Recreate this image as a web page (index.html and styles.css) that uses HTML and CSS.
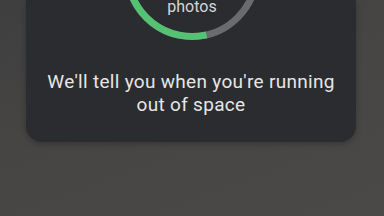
FILE: index.html
```html
<!DOCTYPE html>
<html lang="en">
<head>
  <meta charset="UTF-8">
  <title>Storage</title>
  <link rel="stylesheet" href="styles.css">
</head>
<body>
  <div class="card">
    <svg class="ring" width="136" height="41" viewBox="0 96 136 41">
      <circle cx="68" cy="68" r="64.5" fill="none" stroke="#6a6b6e" stroke-width="7"/>
      <!-- green part: from left side down to just past the bottom -->
      <path d="M 3.5 68 A 64.5 64.5 0 0 0 82.5 130.8" fill="none" stroke="#55c173" stroke-width="7"/>
      <text x="68" y="108" text-anchor="middle" class="ring-label">photos</text>
    </svg>
    <p class="msg">We'll tell you when you're running out of space</p>
  </div>
</body>
</html>
```
FILE: styles.css
```css
html, body { margin: 0; height: 100%; }
body {
  background: linear-gradient(160deg, #403f3f 0%, #474645 50%, #4a4947 100%);
  font-family: Roboto, "Noto Sans", sans-serif;
  overflow: hidden;
}

.card {
  margin: 0 28px 0 26px;
  height: 142px;
  box-sizing: border-box;
  background-color: #2b2c2f;
  border-radius: 0 0 16px 16px;
  box-shadow: 0 2px 6px rgba(0, 0, 0, 0.25);
  display: flex;
  flex-direction: column;
  align-items: center;
}

.ring { display: block; margin-left: 2px; }
.ring-label { font-family: Roboto, sans-serif; font-size: 16px; fill: #d6d6d6; }

.msg {
  margin: 29px 0 0;
  width: 296px;
  text-align: center;
  color: #e6e6e6;
  font-size: 19px;
  letter-spacing: 0.3px;
  line-height: 23px;
}
```
